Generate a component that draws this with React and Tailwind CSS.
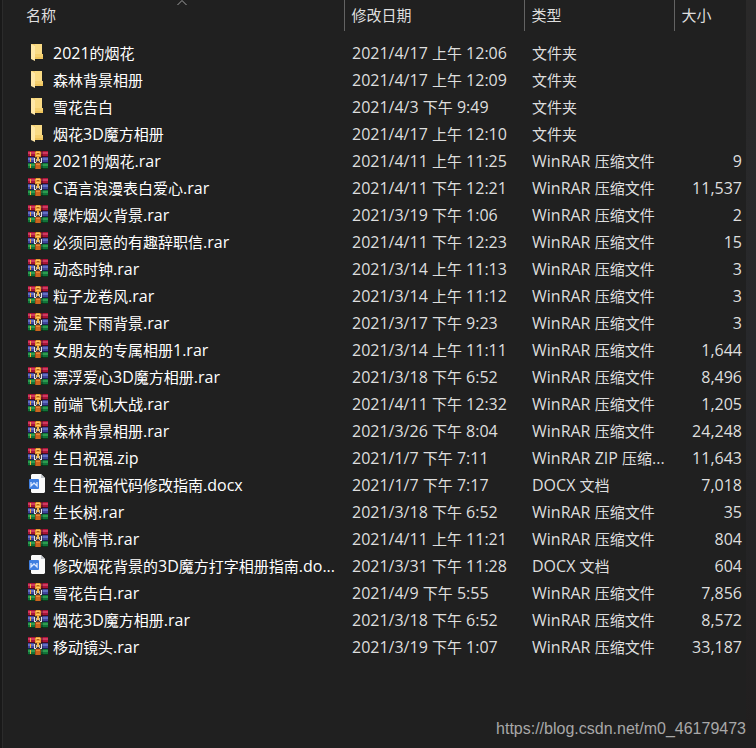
import React from 'react';

const files = [
    { name: '2021的烟花', date: '2021/4/17 上午 12:06', type: '文件夹', size: '', icon: 'folder' },
    { name: '森林背景相册', date: '2021/4/17 上午 12:09', type: '文件夹', size: '', icon: 'folder' },
    { name: '雪花告白', date: '2021/4/3 下午 9:49', type: '文件夹', size: '', icon: 'folder' },
    { name: '烟花3D魔方相册', date: '2021/4/17 上午 12:10', type: '文件夹', size: '', icon: 'folder' },
    { name: '2021的烟花.rar', date: '2021/4/11 上午 11:25', type: 'WinRAR 压缩文件', size: '9', icon: 'rar' },
    { name: 'C语言浪漫表白爱心.rar', date: '2021/4/11 下午 12:21', type: 'WinRAR 压缩文件', size: '11,537', icon: 'rar' },
    { name: '爆炸烟火背景.rar', date: '2021/3/19 下午 1:06', type: 'WinRAR 压缩文件', size: '2', icon: 'rar' },
    { name: '必须同意的有趣辞职信.rar', date: '2021/4/11 下午 12:23', type: 'WinRAR 压缩文件', size: '15', icon: 'rar' },
    { name: '动态时钟.rar', date: '2021/3/14 上午 11:13', type: 'WinRAR 压缩文件', size: '3', icon: 'rar' },
    { name: '粒子龙卷风.rar', date: '2021/3/14 上午 11:12', type: 'WinRAR 压缩文件', size: '3', icon: 'rar' },
    { name: '流星下雨背景.rar', date: '2021/3/17 下午 9:23', type: 'WinRAR 压缩文件', size: '3', icon: 'rar' },
    { name: '女朋友的专属相册1.rar', date: '2021/3/14 上午 11:11', type: 'WinRAR 压缩文件', size: '1,644', icon: 'rar' },
    { name: '漂浮爱心3D魔方相册.rar', date: '2021/3/18 下午 6:52', type: 'WinRAR 压缩文件', size: '8,496', icon: 'rar' },
    { name: '前端飞机大战.rar', date: '2021/4/11 下午 12:32', type: 'WinRAR 压缩文件', size: '1,205', icon: 'rar' },
    { name: '森林背景相册.rar', date: '2021/3/26 下午 8:04', type: 'WinRAR 压缩文件', size: '24,248', icon: 'rar' },
    { name: '生日祝福.zip', date: '2021/1/7 下午 7:11', type: 'WinRAR ZIP 压缩...', size: '11,643', icon: 'rar' },
    { name: '生日祝福代码修改指南.docx', date: '2021/1/7 下午 7:17', type: 'DOCX 文档', size: '7,018', icon: 'doc' },
    { name: '生长树.rar', date: '2021/3/18 下午 6:52', type: 'WinRAR 压缩文件', size: '35', icon: 'rar' },
    { name: '桃心情书.rar', date: '2021/4/11 上午 11:21', type: 'WinRAR 压缩文件', size: '804', icon: 'rar' },
    { name: '修改烟花背景的3D魔方打字相册指南.do...', date: '2021/3/31 下午 11:28', type: 'DOCX 文档', size: '604', icon: 'doc' },
    { name: '雪花告白.rar', date: '2021/4/9 下午 5:55', type: 'WinRAR 压缩文件', size: '7,856', icon: 'rar' },
    { name: '烟花3D魔方相册.rar', date: '2021/3/18 下午 6:52', type: 'WinRAR 压缩文件', size: '8,572', icon: 'rar' },
    { name: '移动镜头.rar', date: '2021/3/19 下午 1:07', type: 'WinRAR 压缩文件', size: '33,187', icon: 'rar' },
];

const FolderIcon = () => (
    <svg width="20" height="20" viewBox="0 0 20 20" className="mb-[3px] shrink-0" aria-hidden="true">
        <path d="M3 2h11v10h1v5H6z" fill="#f5d070" />
        <path d="M7 2h7v10H7z" fill="#fadb85" />
        <path d="M3 2l4 2v15l-4-2z" fill="#ffe8a8" />
        <path d="M7 15h8v2H7z" fill="#efc45c" />
    </svg>
);

const RarIcon = () => (
    <svg width="20" height="20" viewBox="0 0 20 20" className="mb-[3px] shrink-0" aria-hidden="true">
        {/* three stacked books */}
        <path d="M0 1h20v6H0z" fill="#a81438" />
        <path d="M0 2h20v2H0z" fill="#cf3a60" />
        <path d="M0 6h20v1H0z" fill="#4c0a1e" />
        <path d="M0 7h20v6H0z" fill="#3f469c" />
        <path d="M0 8h20v2H0z" fill="#6570c4" />
        <path d="M0 12h20v1H0z" fill="#1c2054" />
        <path d="M0 13h20v6H0z" fill="#12743a" />
        <path d="M0 14h20v2H0z" fill="#2d9c50" />
        <path d="M0 18h20v1H0z" fill="#083c1a" />
        <path d="M13 1h2v18h-2z" fill="#101018" opacity=".35" />
        <path d="M2 2h1v4H2zM2 8h1v4H2zM2 14h1v4H2z" fill="#f2b03c" />
        {/* belt and buckle */}
        <path d="M7 1h6v18H7z" fill="#9c4a18" />
        <path d="M8 1h4v1h1v5H7V2h1z" fill="#e59a30" />
        <path d="M8 2h4v1H8zM8 5h4v1H8z" fill="#ffc863" />
        <path d="M9 3h2v1H9z" fill="#a8611c" />
        <path d="M6 7h8v6H6z" fill="#4b3a38" />
        <path d="M6 8h1v4h1v1H6zM13 8h1v5h-2v-1h1z" fill="#e2e2e6" />
        <path d="M8 9h1v3H8zM11 9h1v3h-1z" fill="#b9b9c0" />
        <path d="M9 7h2v4H9z" fill="#f4b84c" />
        <path d="M8 13h4v6H8z" fill="#c9651f" />
        <path d="M8 14h4v1H8z" fill="#e58a3a" />
    </svg>
);

const DocIcon = () => (
    <svg width="20" height="20" viewBox="0 0 20 20" className="mb-[3px] shrink-0" aria-hidden="true">
        <path d="M4 0h9l4 4v14l-1 1H4l-1-1V1z" fill="#fafafa" />
        <path d="M13 0v4h4z" fill="#c4c7cc" />
        <rect x="1" y="5" width="10" height="10" rx="1" fill="#3f7fe0" />
        <path d="M3 8v4l3-3 3 3V8" fill="none" stroke="#dbe8ff" strokeWidth="1.300" />
    </svg>
);

const icons = { folder: FolderIcon, rar: RarIcon, doc: DocIcon };

// Chinese glyphs fill the whole em box, so they are set a step smaller than the latin runs
const Label = ({ text }) => (
    <span className="whitespace-nowrap">
        {text.split(/([\u4e00-\u9fff]+)/).filter(Boolean).map((part, i) => (
            <span key={i} className={/[\u4e00-\u9fff]/.test(part) ? 'text-[15px]' : 'text-base'}>{part}</span>
        ))}
    </span>
);

const columns = ['修改日期', '类型', '大小'];

const App = () => {
    return (
        <div className="flex min-h-screen bg-[#202020] text-[#dedede] font-['Open_Sans','Noto_Sans_CJK_SC',sans-serif]">
            <div className="w-[3px] shrink-0 border-r border-[#2b2b2b] bg-[#191919]"></div>

            <main className="flex min-w-0 grow flex-col">
                <table className="w-full table-fixed border-collapse">
                    <colgroup>
                        <col />
                        <col className="w-[180px]" />
                        <col className="w-[150px]" />
                        <col className="w-[72px]" />
                    </colgroup>
                    <thead>
                        <tr className="h-[31px]">
                            <th className="relative p-0 pl-[23px] text-left text-[15px] leading-[31px] font-normal">
                                <button type="button">名称</button>
                                <svg width="10" height="6" viewBox="0 0 10 6" className="absolute top-0 left-[174px]" aria-hidden="true">
                                    <path d="M0.500 5L5 0.500L9.500 5" fill="none" stroke="#a0a0a0" />
                                </svg>
                            </th>
                            {columns.map(col => (
                                <th key={col} className="border-l border-[#636363] p-0 pl-[7px] text-left text-[15px] leading-[31px] font-normal">
                                    <button type="button">{col}</button>
                                </th>
                            ))}
                        </tr>
                        <tr className="h-[9px]"></tr>
                    </thead>
                    <tbody>
                        {files.map(file => {
                            const Icon = icons[file.icon];
                            return (
                                <tr key={file.name} className="h-[27px] leading-[27px]">
                                    <td className="p-0 pl-[25px] text-white">
                                        <div className="flex h-[27px] items-center gap-[5px]">
                                            <Icon />
                                            <Label text={file.name} />
                                        </div>
                                    </td>
                                    <td className="p-0 pl-2"><Label text={file.date} /></td>
                                    <td className="p-0 pl-2"><Label text={file.type} /></td>
                                    <td className="p-0 pr-1 text-right"><Label text={file.size} /></td>
                                </tr>
                            );
                        })}
                    </tbody>
                </table>

                <footer className="mt-auto pb-[7px] text-right font-['Liberation_Sans',sans-serif] text-base text-[#a8a8a8]">
                    https://blog.csdn.net/m0_46179473
                </footer>
            </main>

            <div className="mb-[18px] w-[10px] shrink-0 bg-linear-to-b from-[#2a2929] via-[#27282b] to-[#211f1f]"></div>
        </div>
    );
};

export default App;
